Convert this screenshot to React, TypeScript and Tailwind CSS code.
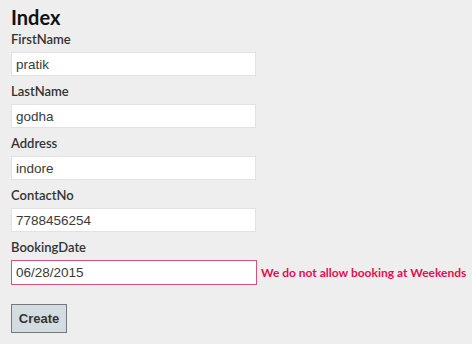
const fields = [
  { label: 'FirstName', value: 'pratik' },
  { label: 'LastName', value: 'godha' },
  { label: 'Address', value: 'indore' },
  { label: 'ContactNo', value: '7788456254' },
];

export default function App() {
  return (
    <div className="w-[472px] h-[344px] bg-[#eeeeee] px-[11px] pt-[4px] text-[#333] font-['Lato','Open_Sans',sans-serif] overflow-hidden">
      <h2 className="text-[20px] font-bold leading-[26px] text-[#111]">Index</h2>
      {fields.map((f) => (
        <div key={f.label} className="h-[52px]">
          <label className="block text-[13px] font-semibold leading-[18px] text-[#333]">{f.label}</label>
          <input
            readOnly
            value={f.value}
            className="mt-[4px] block w-[245px] h-[24px] bg-white border border-[#e2e2e2] px-[4px] text-[13.5px] text-[#3a3a3a] font-['Liberation_Sans',Arial,sans-serif] outline-none"
          />
        </div>
      ))}
      <div>
        <label className="block text-[13px] font-semibold leading-[18px] text-[#333]">BookingDate</label>
        <div className="mt-[4px] flex items-center gap-[4px] w-[470px]">
          <input
            readOnly
            value="06/28/2015"
            className="block w-[246px] h-[25px] bg-white border border-[#d4537a] px-[4px] text-[13.5px] text-[#3a3a3a] font-['Liberation_Sans',Arial,sans-serif] outline-none"
          />
          <span className="whitespace-nowrap text-[12px] font-bold text-[#e80c4d]">We do not allow booking at Weekends</span>
        </div>
      </div>
      <button className="mt-[19px] w-[56px] h-[29px] bg-[#d3dce0] border border-[#787878] text-[13px] font-bold text-[#333] font-['Liberation_Sans',Arial,sans-serif]">
        Create
      </button>
    </div>
  );
}
